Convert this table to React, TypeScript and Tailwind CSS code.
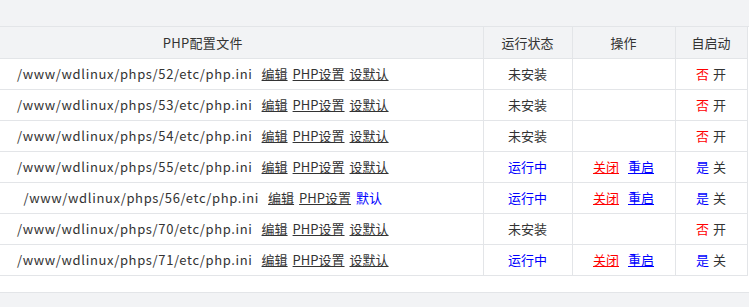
const rows = [
  { v: "52", running: false, def: "设默认" },
  { v: "53", running: false, def: "设默认" },
  { v: "54", running: false, def: "设默认" },
  { v: "55", running: true, def: "设默认" },
  { v: "56", running: true, def: "默认" },
  { v: "70", running: false, def: "设默认" },
  { v: "71", running: true, def: "设默认" },
];

export default function App() {
  return (
    <div
      className="w-[749px] h-[307px] bg-[#f2f3f5] overflow-hidden text-[13px] text-[#333]"
      style={{ fontFamily: '"Noto Sans CJK SC", "Noto Sans", sans-serif' }}
    >
      <div className="h-[26px]" />
      <div className="bg-white border-t border-b border-[#e3e5e8] overflow-hidden">
        <table className="-ml-[77px] w-[824px] border-collapse table-fixed mb-[16px]">
          <colgroup>
            <col className="w-[560px]" />
            <col className="w-[89px]" />
            <col className="w-[103px]" />
            <col className="w-[72px]" />
          </colgroup>
          <thead>
            <tr className="h-[31px] bg-[#f2f3f5]">
              <th className="font-normal text-center border-b border-[#e3e5e8] tracking-[0.3px]">PHP配置文件</th>
              <th className="font-normal text-center border-b border-l border-[#e3e5e8]">运行状态</th>
              <th className="font-normal text-center border-b border-l border-[#e3e5e8]">操作</th>
              <th className="font-normal text-center border-b border-l border-r border-[#e3e5e8]">自启动</th>
            </tr>
          </thead>
          <tbody>
            {rows.map((r) => (
              <tr key={r.v} className="h-[31px]">
                <td className="text-center border-b border-[#e3e5e8] whitespace-nowrap">
                  <span className="tracking-[0.65px]">/www/wdlinux/phps/{r.v}/etc/php.ini</span>
                  <a className="underline ml-[9px]">编辑</a>
                  <a className="underline ml-[5px]">PHP设置</a>
                  {r.def === "默认" ? (
                    <span className="ml-[5px] text-[#0000ff]">默认</span>
                  ) : (
                    <a className="underline ml-[5px]">{r.def}</a>
                  )}
                </td>
                <td className="text-center border-b border-l border-[#e3e5e8]">
                  {r.running ? <span className="text-[#0000ff]">运行中</span> : "未安装"}
                </td>
                <td className="text-center border-b border-l border-[#e3e5e8]">
                  {r.running && (
                    <>
                      <a className="underline text-[#ff0000]">关闭</a>
                      <a className="underline text-[#0000ff] ml-[9px]">重启</a>
                    </>
                  )}
                </td>
                <td className="text-center border-b border-l border-r border-[#e3e5e8]">
                  {r.running ? (
                    <>
                      <span className="text-[#0000ff]">是</span>
                      <span className="ml-[4px]">关</span>
                    </>
                  ) : (
                    <>
                      <span className="text-[#ff0000]">否</span>
                      <span className="ml-[4px]">开</span>
                    </>
                  )}
                </td>
              </tr>
            ))}
          </tbody>
        </table>
      </div>
    </div>
  );
}
